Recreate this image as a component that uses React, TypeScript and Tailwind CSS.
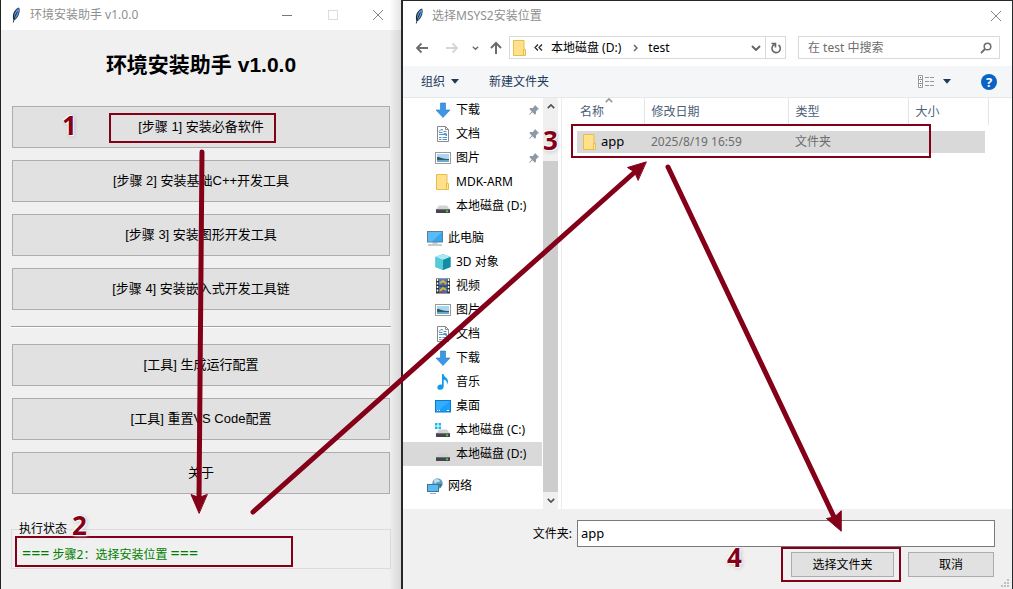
import type { ReactNode } from 'react';

const RED = '#840018';

const setupSteps = [
  '[步骤 1] 安装必备软件',
  '[步骤 2] 安装基础C++开发工具',
  '[步骤 3] 安装图形开发工具',
  '[步骤 4] 安装嵌入式开发工具链',
];

const tools = ['[工具] 生成运行配置', '[工具] 重置VS Code配置', '关于'];

type IconName =
  | 'download'
  | 'document'
  | 'picture'
  | 'folder'
  | 'drive'
  | 'system'
  | 'computer'
  | 'cube'
  | 'video'
  | 'music'
  | 'desktop'
  | 'network';

interface NavItem {
  label: string;
  icon: IconName;
  pinned?: boolean;
  selected?: boolean;
}

const quickAccess: NavItem[] = [
  { label: '下载', icon: 'download', pinned: true },
  { label: '文档', icon: 'document', pinned: true },
  { label: '图片', icon: 'picture', pinned: true },
  { label: 'MDK-ARM', icon: 'folder' },
  { label: '本地磁盘 (D:)', icon: 'drive' },
];

const thisComputer: NavItem[] = [
  { label: '3D 对象', icon: 'cube' },
  { label: '视频', icon: 'video' },
  { label: '图片', icon: 'picture' },
  { label: '文档', icon: 'document' },
  { label: '下载', icon: 'download' },
  { label: '音乐', icon: 'music' },
  { label: '桌面', icon: 'desktop' },
  { label: '本地磁盘 (C:)', icon: 'system' },
  { label: '本地磁盘 (D:)', icon: 'drive', selected: true },
];

const drive = (
  <>
    <path d="M4 7.500h8l3 4H1z" fill="#d0d2d4" />
    <rect x="1" y="11" width="14" height="4" rx="0.5" fill="#43474a" />
    <path d="M1.500 11.500h13" stroke="#6e7275" />
    <circle cx="12" cy="13.200" r="1" fill="#45e05a" />
  </>
);

const glyphs: Record<IconName, ReactNode> = {
  download: <path d="M5.500 1h5v7H15l-7 7.500L1 8h4.500z" fill="#3c97e4" stroke="#2579c6" strokeWidth="0.6" />,
  document: (
    <>
      <path d="M2.500.5h8l3 3v12h-11z" fill="#fff" stroke="#8a8a8a" />
      <path d="M10.500.5v3h3" fill="none" stroke="#8a8a8a" />
      <path d="M4 6.500h3.500M8.500 5.500h3M8.500 7.500h3M4 11.500h2.500M4 13.500h2.500M10.500 9.500h1.500" stroke="#6d8ea8" />
      <path d="M4 8.500h8M7.500 11.500h4.500M7.500 13.500h4.500" stroke="#3f9bdc" />
      <path d="M4 5.500 6 3.500l2 .5" fill="none" stroke="#2682c4" />
    </>
  ),
  picture: (
    <>
      <rect x="0.5" y="2.500" width="15" height="11" fill="#fff" stroke="#9a9a9a" />
      <rect x="2" y="4" width="12" height="8" fill="#a9d6f5" />
      <path d="M2 7c3-.5 5 2 12 2v1.500H2z" fill="#2d5f63" />
      <path d="M2 10.500c4-1 8 0 12-.5V12H2z" fill="#6fa8cf" />
    </>
  ),
  folder: (
    <>
      <path d="M1.500.5H12v15H1.500z" fill="#ffe08b" stroke="#e8bd4a" />
      <path d="M11.500 9.500h2v6h-2z" fill="#ffe9a8" stroke="#e8bd4a" />
    </>
  ),
  drive,
  system: (
    <>
      {drive}
      <path d="M0 1h2.500v2.500H0zM3.500 1H6v2.500H3.500zM0 4.500h2.500V7H0zM3.500 4.500H6V7H3.500z" fill="#18b7ea" />
    </>
  ),
  computer: (
    <>
      <rect x="0.5" y="1.500" width="15" height="10.500" fill="#35a7ef" stroke="#617f91" />
      <path d="M1 2h14L5 11.500H1z" fill="#72caff" opacity="0.6" />
      <path d="M1 15h14M5.500 13h5" stroke="#879aa5" />
    </>
  ),
  cube: (
    <>
      <path d="m8 0 7.500 3v10L8 16 .5 13V3z" fill="#29acc0" />
      <path d="m8 0 7.500 3L8 6 .5 3z" fill="#a8eaf1" />
      <path d="M.5 3 8 6v10L.5 13z" fill="#55cad8" />
      <path d="M8 6l7.500-3v10L8 16z" fill="#138da5" />
    </>
  ),
  video: (
    <>
      <rect x="1" y="0.5" width="14" height="15" fill="#333" />
      <path d="M2.500 1v14M13.500 1v14" stroke="#fff" strokeWidth="1.500" strokeDasharray="2 1.500" />
      <rect x="4" y="1" width="8" height="6.500" fill="#4a7ed0" />
      <rect x="4" y="8.500" width="8" height="6.500" fill="#3c6fc0" />
      <path d="m5 5 3-2 3 3M5 13l3-3 3 2" stroke="#ddb52b" strokeWidth="2" fill="none" />
      <path d="M7 6h3M5 14h4" stroke="#a33f2d" />
    </>
  ),
  music: (
    <path
      d="M7 0h1.500c.3 3 4.500 3.500 4.500 7.500 0 1-.4 2-.9 2.700.2-2.500-1-4-3.400-4.700v7c0 2-1.400 3.300-3.300 3.300S2.300 15 2.300 13.500C2.300 11.300 4.700 10 7 10.700z"
      fill="#119af0"
    />
  ),
  desktop: (
    <>
      <rect x="0.5" y="2.500" width="15" height="11.500" fill="#1ba1fb" stroke="#0b79cc" />
      <path d="M1 3h14L4 12H1z" fill="#4fb9ff" opacity="0.5" />
      <path d="M2 12.500h1M4 12.500h1M12 12.500h2" stroke="#fff" />
    </>
  ),
  network: (
    <>
      <circle cx="10.500" cy="5.500" r="5.200" fill="#5d9fc1" />
      <path d="M7 2c2-2 5-1 6 1-1 2-3 0-4 2s-2 0-2-3z" fill="#c0dfe9" />
      <path d="M12 6l3 0-2 4z" fill="#336f91" />
      <rect x="0.5" y="6.500" width="11" height="7" fill="#55baf5" stroke="#47748c" />
      <path d="M3 15.500h6" stroke="#97aab5" />
    </>
  ),
};

function Icon({ name }: { name: IconName }) {
  return (
    <svg viewBox="0 0 16 16" className="size-4 shrink-0" aria-hidden="true">
      {glyphs[name]}
    </svg>
  );
}

function Feather() {
  return (
    <svg viewBox="0 0 12 16" className="h-4 w-3 shrink-0" aria-hidden="true">
      <path d="M9 .5c1.300 2 .6 5.500-.6 8-1.200 2.300-2.700 4.300-4.600 4.800C2.200 10 3 6 5 3.500 6.200 1.900 7.500.9 9 .5z" fill="#1c2733" />
      <path d="M8.700 1.200C9.700 4.500 8 9 4.600 12.400 2.900 9 5.200 3.200 8.700 1.200z" fill="#5a9be6" />
      <path d="M7.500 4.500C6 7.500 4 11 3.300 15.500" fill="none" stroke="#111" strokeWidth="0.8" />
    </svg>
  );
}

function Pin() {
  return (
    <svg viewBox="0 0 12 12" className="size-3 shrink-0" aria-hidden="true">
      <path d="M7 1l4 4-1.200.6-1.800 1.800v2.400L6.900 10.700 4.500 8.300 1 11.300.7 11l3-3.500L1.300 5.100l1.100-1.100h2.400l1.600-1.800z" fill="#8e9aa5" />
    </svg>
  );
}

function Chevron({ up, className }: { up?: boolean; className?: string }) {
  return (
    <svg viewBox="0 0 10 6" className={className} aria-hidden="true">
      <path d={up ? 'M1 5l4-4 4 4' : 'M1 1l4 4 4-4'} fill="none" stroke="currentColor" strokeWidth="2" />
    </svg>
  );
}

function Caret() {
  return (
    <svg viewBox="0 0 8 5" className="h-[5px] w-2" aria-hidden="true">
      <path d="M0 0h8L4 4.800z" fill="#1e395b" />
    </svg>
  );
}

function CloseGlyph() {
  return (
    <svg viewBox="0 0 12 12" className="size-3" aria-hidden="true">
      <path d="M1 1l10 10M11 1L1 11" stroke="#858585" />
    </svg>
  );
}

function Arrow({ flip }: { flip?: boolean }) {
  return (
    <svg viewBox="0 0 14 12" className="h-3 w-[14px]" aria-hidden="true">
      <path
        d={flip ? 'M1 6h11M7.500 1.500L12 6l-4.500 4.500' : 'M13 6H2M6.500 1.500L2 6l4.500 4.500'}
        fill="none"
        stroke="currentColor"
        strokeWidth="1.800"
      />
    </svg>
  );
}

// Hand-placed step number, floats over whatever it labels.
function StepNumber({ n, className }: { n: number; className: string }) {
  return (
    <span
      className={`pointer-events-none absolute z-20 font-['Open_Sans','Noto_Sans',sans-serif] text-[26px] leading-6 font-bold text-[#840018] [text-shadow:0_0_2px_#fff,1px_1px_1px_#fff,-1px_-1px_1px_#fff,1px_1px_4px_#aaa] ${className}`}
    >
      {n}
    </span>
  );
}

function Highlight({ className }: { className: string }) {
  return <span className={`pointer-events-none absolute z-10 border-2 border-[#840018] ${className}`} />;
}

function ActionButton({ label, highlighted }: { label: string; highlighted?: boolean }) {
  return (
    <button
      type="button"
      className="relative h-[42px] w-full border border-[#adadad] bg-[#e1e1e1] text-[13px] text-black"
    >
      {label}
      {highlighted && (
        <>
          <Highlight className="top-1.5 right-[113px] bottom-1 left-24" />
          <StepNumber n={1} className="top-1.5 left-[49px]" />
        </>
      )}
    </button>
  );
}

function AssistantWindow() {
  return (
    <section className="relative flex flex-col border-l border-[#222] bg-[#f0f0f0] font-['Liberation_Sans','Noto_Sans_CJK_SC',sans-serif]">
      <header className="flex h-[30px] items-center bg-white pr-[17px] pl-[9px] font-['Noto_Sans','Noto_Sans_CJK_SC',sans-serif] text-xs text-[#8f8f8f]">
        <Feather />
        <span className="ml-2 flex-1">环境安装助手 v1.0.0</span>
        <div className="flex items-center gap-[34px]">
          <button type="button" aria-label="最小化" className="h-3 w-3">
            <span className="block h-px w-2.5 bg-[#777]" />
          </button>
          <button type="button" aria-label="最大化" className="size-[10px] border border-[#ddd]" />
          <button type="button" aria-label="关闭">
            <CloseGlyph />
          </button>
        </div>
      </header>

      <main className="px-2.5">
        <h1 className="pt-[21px] text-center text-[21px] leading-7 font-bold text-black">环境安装助手 v1.0.0</h1>
        <div className="mt-[27px] flex flex-col gap-3 px-px">
          {setupSteps.map((label, i) => (
            <ActionButton key={label} label={label} highlighted={i === 0} />
          ))}
        </div>
        <hr className="my-4 h-0.5 border-t border-b border-t-[#a0a0a0] border-b-white" />
        <div className="flex flex-col gap-3 px-px">
          {tools.map((label) => (
            <ActionButton key={label} label={label} />
          ))}
        </div>

        <fieldset className="relative mt-[27px] h-12 border border-[#dcdcdc] px-2.5 font-['Noto_Sans','Noto_Sans_CJK_SC',sans-serif] text-xs text-black">
          <legend className="-ml-[3px] leading-4">执行状态</legend>
          <p className="pt-2 leading-4 text-[#008000]">
            <span className="text-base leading-4">===</span> 步骤2：选择安装位置{' '}
            <span className="text-base leading-4">===</span>
          </p>
          <Highlight className="bottom-px left-[3px] h-[31px] w-[278px]" />
          <StepNumber n={2} className="-top-6 left-[60px]" />
        </fieldset>
      </main>
      {/* shadow cast by the dialog in front */}
      <div className="pointer-events-none absolute inset-y-0 right-0 w-3 bg-linear-to-r from-transparent to-black/10" />
    </section>
  );
}

function NavRow({ item, root }: { item: NavItem; root?: boolean }) {
  return (
    <li>
      <a
        href="#"
        className={`mr-px flex h-6 items-center gap-[5px] pr-0.5 ${root ? 'pl-6' : 'pl-8'} ${
          item.selected ? 'bg-[#d9d9d9]' : ''
        }`}
      >
        <Icon name={item.icon} />
        <span className="flex-1 whitespace-nowrap">{item.label}</span>
        {item.pinned && <Pin />}
      </a>
    </li>
  );
}

function NavTree() {
  return (
    <nav className="flex w-[155px] shrink-0 text-black">
      <ul className="flex-1">
        {quickAccess.map((item) => (
          <NavRow key={item.label} item={item} />
        ))}
        <li className="mt-2">
          <ul>
            <NavRow item={{ label: '此电脑', icon: 'computer' }} root />
            {thisComputer.map((item) => (
              <NavRow key={item.label} item={item} />
            ))}
          </ul>
        </li>
        <li className="mt-2">
          <ul>
            <NavRow item={{ label: '网络', icon: 'network' }} root />
          </ul>
        </li>
      </ul>
      <div className="relative flex w-[15px] flex-col items-center justify-between bg-[#f0f0f0] py-1.5 text-[#505050]">
        <Chevron up className="h-[5px] w-2" />
        <span className="absolute inset-x-0 top-[63px] bottom-[17px] bg-[#cdcdcd]" />
        <Chevron className="h-[5px] w-2" />
        <StepNumber n={3} className="top-[30px] left-0" />
      </div>
    </nav>
  );
}

function FileList() {
  return (
    <div className="relative ml-[3px] min-w-0 flex-1 border-l border-[#ececec] pr-[27px] pl-[15px]">
      <table className="w-full table-fixed border-collapse text-left">
        <colgroup>
          <col className="w-[67px]" />
          <col className="w-[144px]" />
          <col className="w-[120px]" />
          <col />
        </colgroup>
        <thead className="text-[#4c607a]">
          <tr className="h-[27px]">
            <th className="relative border-r border-[#e5e5e5] pl-[3px] font-normal">
              名称
              <Chevron up className="absolute top-0 left-7 h-[5px] w-2 text-[#999]" />
            </th>
            <th className="border-r border-[#e5e5e5] pl-[7px] font-normal">修改日期</th>
            <th className="border-r border-[#e5e5e5] pl-[7px] font-normal">类型</th>
            <th className="pl-[7px] font-normal">大小</th>
          </tr>
        </thead>
        <tbody>
          <tr className="h-1.5" />
          <tr className="h-[22px] bg-[#d9d9d9] text-[#6d6d6d]">
            <td className="text-black">
              <span className="flex items-center gap-[3px] pl-[5px] text-[13px]">
                <Icon name="folder" />
                app
              </span>
            </td>
            <td className="pl-[7px]">2025/8/19 16:59</td>
            <td className="pl-[7px]">文件夹</td>
            <td />
          </tr>
        </tbody>
      </table>
      {/* right edge of the size column */}
      <span className="absolute top-0 right-[23px] h-[27px] w-px bg-[#e5e5e5]" />
      <Highlight className="top-[26px] right-[81px] left-[9px] h-[34px]" />
    </div>
  );
}

function FolderDialog() {
  return (
    <section className="flex flex-col border-t border-r border-l-2 border-[#26282b] bg-white font-['Noto_Sans','Noto_Sans_CJK_SC',sans-serif] text-xs">
      <header className="flex h-7 items-center gap-[7px] px-2.5 pt-px text-[#8f8f8f]">
        <Feather />
        <span className="flex-1">选择MSYS2安装位置</span>
        <button type="button" aria-label="关闭">
          <CloseGlyph />
        </button>
      </header>

      <div className="flex items-center px-3 py-[7px] text-[#6d6d6d]">
        <button type="button" aria-label="后退">
          <Arrow />
        </button>
        <button type="button" aria-label="前进" className="ml-4 text-[#d5d5d5]">
          <Arrow flip />
        </button>
        <button type="button" aria-label="最近位置" className="ml-[13px]">
          <Chevron className="h-1 w-[7px]" />
        </button>
        <button type="button" aria-label="上移" className="ml-[11px]">
          <svg viewBox="0 0 12 14" className="h-[14px] w-3" aria-hidden="true">
            <path d="M6 13V2M1 7l5-5 5 5" fill="none" stroke="currentColor" strokeWidth="2" />
          </svg>
        </button>
        <div className="ml-[7px] flex h-[23px] flex-1 items-center border border-[#d9d9d9] pl-0.5 text-black">
          <Icon name="folder" />
          <svg viewBox="0 0 9 7" className="ml-1.5 h-[7px] w-[9px]" aria-hidden="true">
            <path d="M4 .5l-3 3 3 3M8 .5l-3 3 3 3" fill="none" stroke="#222" strokeWidth="1.200" />
          </svg>
          <a href="#" className="ml-2">
            本地磁盘 (D:)
          </a>
          <svg viewBox="0 0 5 8" className="ml-3 h-2 w-[5px]" aria-hidden="true">
            <path d="M1 1l3 3-3 3" fill="none" stroke="#666" strokeWidth="1.500" />
          </svg>
          <a href="#" className="ml-2.5 flex-1">
            test
          </a>
          <button type="button" aria-label="历史记录" className="mr-1 text-[#666]">
            <Chevron className="h-1.5 w-2.5" />
          </button>
          <button
            type="button"
            aria-label="刷新"
            className="flex h-full w-5 items-center justify-center border-l border-[#d9d9d9] text-[#666]"
          >
            <svg viewBox="0 0 12 12" className="size-3" aria-hidden="true">
              <path d="M8.500 3A4.200 4.200 0 1 1 4.500 2.600M1.500 1.500h4v4" fill="none" stroke="currentColor" strokeWidth="1.600" />
            </svg>
          </button>
        </div>
        <label className="ml-3 flex h-[23px] w-[202px] items-center border border-[#d9d9d9] pr-[7px] pl-[9px]">
          <input
            type="text"
            aria-label="搜索"
            placeholder="在 test 中搜索"
            className="min-w-0 flex-1 outline-none placeholder:text-[#6d6d6d]"
          />
          <svg viewBox="0 0 12 12" className="size-3" aria-hidden="true">
            <circle cx="7.500" cy="4.500" r="3.300" fill="none" stroke="currentColor" strokeWidth="1.500" />
            <path d="M5 7L1 11" stroke="currentColor" strokeWidth="1.800" />
          </svg>
        </label>
      </div>

      <div className="flex h-8 items-center border-b border-[#e5e8eb] bg-[#f5f6f7] pr-[15px] pl-[18px] text-[#1e395b]">
        <button type="button" className="flex items-center gap-1.5">
          组织 <Caret />
        </button>
        <button type="button" className="ml-[30px]">
          新建文件夹
        </button>
        <button type="button" aria-label="更改视图" className="ml-auto flex items-center gap-2">
          <svg viewBox="0 0 17 13" className="h-[13px] w-[17px]" aria-hidden="true">
            <path d="M.5.5h4v12h-4zM.5 4.500h4M.5 8.500h4" fill="#fff" stroke="#999" />
            <path d="M2 2.500h1" stroke="#555" />
            <path d="M2 6.500h1" stroke="#3485ee" />
            <path d="M2 10.500h1" stroke="#e03030" />
            <path d="M7 2.500h4M12 2.500h4M7 6.500h4M12 6.500h4M7 10.500h4M12 10.500h4" stroke="#999" />
          </svg>
          <Caret />
        </button>
        <button
          type="button"
          aria-label="帮助"
          className="ml-[30px] flex size-4 items-center justify-center rounded-full bg-[#0a63c4] text-[13px] leading-4 font-bold text-white"
        >
          ?
        </button>
      </div>

      <div className="flex flex-1">
        <NavTree />
        <FileList />
      </div>

      <footer className="relative bg-[#f0f0f0] pt-[11px] pr-[17px] pb-3 text-black">
        <div className="flex items-center gap-[5px]">
          <label htmlFor="folder-name" className="w-[169px] text-right">
            文件夹:
          </label>
          <input
            id="folder-name"
            type="text"
            defaultValue="app"
            className="h-[27px] min-w-0 flex-1 border border-[#7a7a7a] bg-white px-[3px] pb-0.5 text-[13px] outline-none"
          />
        </div>
        <div className="mt-[5px] flex justify-end gap-3.5 pr-px">
          <div className="relative">
            <button type="button" className="h-[25px] w-[103px] border border-[#adadad] bg-[#e1e1e1]">
              选择文件夹
            </button>
            <Highlight className="-top-[5px] -right-[7px] -bottom-[5px] -left-2.5" />
            <StepNumber n={4} className="-top-[7px] -left-16" />
          </div>
          <button type="button" className="h-[25px] w-[86px] border border-[#adadad] bg-[#e1e1e1]">
            取消
          </button>
        </div>
        <svg viewBox="0 0 8 8" className="absolute right-[3px] bottom-0.5 size-2" aria-hidden="true">
          <path d="M6 0h2v2H6zM3 3h2v2H3zM6 3h2v2H6zM0 6h2v2H0zM3 6h2v2H3zM6 6h2v2H6z" fill="#bfbfbf" />
        </svg>
      </footer>
    </section>
  );
}

// Order in which the steps are followed, drawn across both windows.
function FlowArrows() {
  return (
    <svg
      viewBox="0 0 1013 589"
      className="pointer-events-none absolute inset-0 z-10 size-full"
      fill={RED}
      stroke={RED}
      strokeLinecap="round"
      aria-hidden="true"
    >
      <path d="M202 152L199 500M253 512L636 171M668 167L834 517" strokeWidth="5" fill="none" />
      <path d="M199 513L191 494.500l8 3 8-3zM646 162l-18.500 5.500 7 4.500 3.500 8zM841 531l-14.500-12.500 8-1.500 6.500-6z" strokeWidth="1" />
    </svg>
  );
}

export default function App() {
  return (
    <div className="relative grid min-h-screen grid-cols-[401fr_612fr]">
      <AssistantWindow />
      <FolderDialog />
      <FlowArrows />
    </div>
  );
}
